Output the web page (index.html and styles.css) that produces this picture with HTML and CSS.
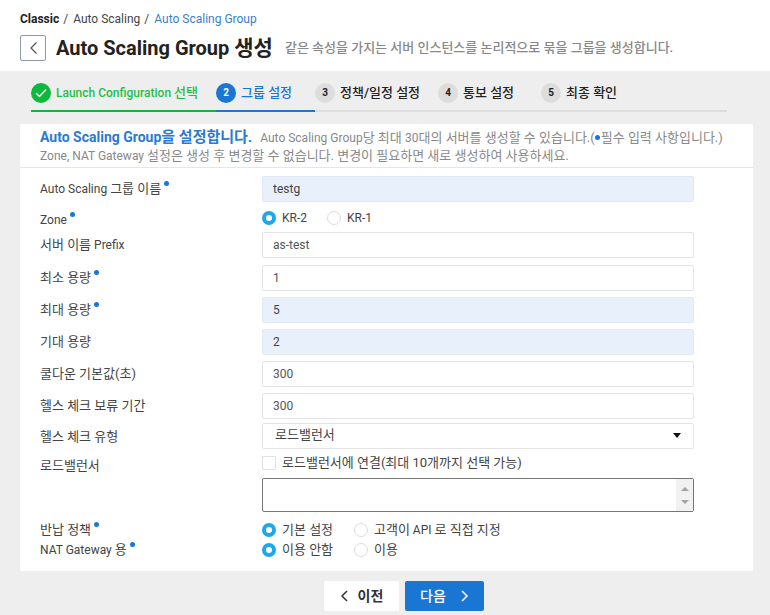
FILE: index.html
```html
<!DOCTYPE html>
<html lang="ko">
<head>
<meta charset="utf-8">
<title>Auto Scaling Group 생성</title>
<link rel="stylesheet" href="styles.css">
</head>
<body>

<header class="top">
  <div class="crumbs">
    <b>Classic</b><span class="sep">/</span><span>Auto Scaling</span><span class="sep">/</span><span class="crumb-on">Auto Scaling Group</span>
  </div>
  <div class="title-row">
    <button class="back" type="button">
      <svg width="9" height="14" viewBox="0 0 9 14"><path d="M7.5 1.5 L2 7 L7.5 12.5" fill="none" stroke="#555" stroke-width="1.3"/></svg>
    </button>
    <h1>Auto Scaling Group <span class="ko">생성</span></h1>
    <p class="title-desc">같은 속성을 가지는 서버 인스턴스를 논리적으로 묶을 그룹을 생성합니다.</p>
  </div>
</header>

<main class="content">
  <ol class="steps">
    <li class="step done s1">
      <span class="num"><svg width="12" height="10" viewBox="0 0 12 10"><path d="M1 5 L4.5 8.5 L11 1.5" fill="none" stroke="#fff" stroke-width="1.4"/></svg></span>
      <span>Launch Configuration <span class="ko">선택</span></span>
    </li>
    <li class="step on s2"><span class="num">2</span><span class="ko">그룹 설정</span></li>
    <li class="step s3"><span class="num">3</span><span class="ko">정책/일정 설정</span></li>
    <li class="step s4"><span class="num">4</span><span class="ko">통보 설정</span></li>
    <li class="step s5"><span class="num">5</span><span class="ko">최종 확인</span></li>
  </ol>

  <section class="card">
    <div class="card-head">
      <p class="head-line"><strong>Auto Scaling Group<span class="ko">을 설정합니다.</span></strong> Auto Scaling Group<span class="ko">당 최대 </span>30<span class="ko">대의 서버를 생성할 수 있습니다.(</span><i class="dot dot-inline"></i><span class="ko">필수 입력 사항입니다.)</span></p>
      <p class="head-line">Zone, NAT Gateway <span class="ko">설정은 생성 후 변경할 수 없습니다. 변경이 필요하면 새로 생성하여 사용하세요.</span></p>
    </div>

    <form class="form">
      <div class="row">
        <label>Auto Scaling <span class="ko">그룹 이름</span><i class="dot"></i></label>
        <input class="field filled" type="text" value="testg">
      </div>
      <div class="row row-zone">
        <label>Zone<i class="dot"></i></label>
        <div class="radios">
          <span class="radio checked">KR-2</span>
          <span class="radio">KR-1</span>
        </div>
      </div>
      <div class="row row-prefix">
        <label><span class="ko">서버 이름</span> Prefix</label>
        <input class="field" type="text" value="as-test">
      </div>
      <div class="row">
        <label class="ko">최소 용량<i class="dot"></i></label>
        <input class="field" type="text" value="1">
      </div>
      <div class="row">
        <label class="ko">최대 용량<i class="dot"></i></label>
        <input class="field filled" type="text" value="5">
      </div>
      <div class="row">
        <label class="ko">기대 용량</label>
        <input class="field filled" type="text" value="2">
      </div>
      <div class="row">
        <label class="ko">쿨다운 기본값(초)</label>
        <input class="field" type="text" value="300">
      </div>
      <div class="row">
        <label class="ko">헬스 체크 보류 기간</label>
        <input class="field" type="text" value="300">
      </div>
      <div class="row row-select">
        <label class="ko">헬스 체크 유형</label>
        <div class="field select"><span class="ko">로드밸런서</span><span class="caret"></span></div>
      </div>
      <div class="row row-lb">
        <label class="ko">로드밸런서</label>
        <div class="lb">
          <div class="check"><span class="box"></span><span class="ko">로드밸런서에 연결(최대 10개까지 선택 가능)</span></div>
          <div class="listbox">
            <div class="scroll"><span class="arrow up"></span><span class="arrow down"></span></div>
          </div>
        </div>
      </div>
      <div class="row row-radio">
        <label class="ko">반납 정책<i class="dot"></i></label>
        <div class="radios">
          <span class="radio checked wide"><span class="ko">기본 설정</span></span>
          <span class="radio"><span><span class="ko">고객이</span> API <span class="ko">로 직접 지정</span></span></span>
        </div>
      </div>
      <div class="row row-radio">
        <label>NAT Gateway <span class="ko">용</span><i class="dot"></i></label>
        <div class="radios">
          <span class="radio checked wide"><span class="ko">이용 안함</span></span>
          <span class="radio"><span class="ko">이용</span></span>
        </div>
      </div>
    </form>
  </section>

  <div class="actions">
    <button class="btn" type="button">
      <svg width="9" height="12" viewBox="0 0 9 12"><path d="M7 1 L2 6 L7 11" fill="none" stroke="#333" stroke-width="1.5"/></svg>
      이전
    </button>
    <button class="btn btn-next" type="button">
      다음
      <svg width="9" height="12" viewBox="0 0 9 12"><path d="M2 1 L7 6 L2 11" fill="none" stroke="#fff" stroke-width="1.5"/></svg>
    </button>
  </div>
</main>

</body>
</html>
```

FILE: styles.css
```css
*, *:before { box-sizing: border-box; }

body {
   margin: 0;
   height: 615px;
   overflow: hidden;
   background: #eee;
   color: #333;
   font: normal 12px/18px Roboto, "Noto Sans CJK KR", sans-serif;
}

p, h1, ol { margin: 0; padding: 0; }

/* hangul runs a size up from the latin next to them */
.ko { font-size: 13px; }

.top {
   height: 71px;
   background: #fff;
   padding: 10px 20px 0;
}

.crumbs { line-height: 18px; color: #444; }
.crumbs b { font-weight: 700; color: #222; }
.crumbs .sep { margin: 0 5px 0 4px; }
.crumb-on { color: #3a7fc9; }

.title-row {
   display: flex;
   align-items: center;
   margin-top: 7px;
}

.back {
   width: 26px;
   height: 26px;
   padding: 0;
   background: #fff;
   border: 1px solid #8a9bb0;
   border-radius: 2px;
   display: flex;
   align-items: center;
   justify-content: center;
}

h1 {
   margin-left: 10px;
   font-size: 20px;
   line-height: 26px;
   font-weight: 700;
   color: #222;
}

h1 .ko { font-size: 21px; }

.title-desc {
   margin-left: 12px;
   font-size: 13px;
   font-weight: 500;
   color: #888;
}

.content { padding: 0 17px 0 20px; }

.steps {
   list-style: none;
   display: flex;
   height: 41px;
   margin: 0 26px 12px 11px;
   border-bottom: 2px solid #ddd;
   font-weight: 500;
   color: #222;
}

.step {
   display: flex;
   align-items: center;
   height: 41px;
   padding-top: 4px;
   border-bottom: 2px solid transparent;
   white-space: nowrap;
}

.s1 { width: 185px; }
.s2 { width: 99px; }
.s3 { width: 123px; }
.s4 { width: 103px; }

.num {
   flex: none;
   width: 20px;
   height: 20px;
   margin-right: 5px;
   border-radius: 50%;
   background: #ddd;
   font-size: 10px;
   font-weight: 700;
   display: flex;
   align-items: center;
   justify-content: center;
}

.step.done { color: #1fbf4a; border-bottom-color: #0cb93c; }
.step.done .num { background: #0cb93c; }
.step.on { color: #1976d2; border-bottom-color: #1976d2; }
.step.on .num { background: #1976d2; color: #fff; }

.card {
   height: 447px;
   background: #fff;
   border-radius: 2px;
}

.card-head {
   height: 44px;
   padding: 4px 20px 0;
   border-bottom: 1px solid #e6e6e6;
   color: #888;
   line-height: 18px;
}

.head-line { white-space: nowrap; }

.card-head strong {
   font-size: 14px;
   font-weight: 700;
   color: #2a7ad0;
   margin-right: 5px;
}

.card-head strong .ko { font-size: 15px; }

.form { padding: 8px 59px 0 20px; }

.row {
   display: flex;
   align-items: center;
   height: 26px;
   margin-bottom: 6px;
}

.row label {
   flex: none;
   width: 222px;
   color: #444;
}

.row-zone { height: 20px; margin-bottom: 4px; margin-top: 6px; }
.row-zone label { padding-top: 4px; }
.row-prefix { margin-bottom: 7px; }
.row-select { margin-bottom: 1px; margin-top: -2px; }
.row-select label { padding-top: 2px; }
.row-lb { align-items: flex-start; height: 62px; margin-bottom: 8px; }
.row-lb label { margin-top: 7px; }
.row-radio { height: 20px; margin-bottom: 0; }

.dot {
   display: inline-block;
   width: 5px;
   height: 5px;
   margin-left: 3px;
   border-radius: 50%;
   background: #1976d2;
   vertical-align: 7px;
}

.dot-inline { margin: 0 1px 0 0; vertical-align: 2px; }

.field {
   flex: 1;
   min-width: 0;
   height: 26px;
   padding: 0 10px;
   border: 1px solid #e4e4e4;
   border-radius: 2px;
   background: #fff;
   color: #555;
   font: inherit;
   outline: 0;
}

.filled { background: #e8f0fb; border-color: #e2e8f2; color: #444; }

.select {
   display: flex;
   align-items: center;
   justify-content: space-between;
   padding: 0 12px 2px 12px;
   color: #444;
}

.caret {
   width: 0;
   height: 0;
   border: 4px solid transparent;
   border-top: 5px solid #111;
   border-bottom: 0;
}

.radios { display: flex; align-items: center; }

.radio {
   display: flex;
   align-items: center;
   margin-right: 20px;
   color: #444;
}

.radio:before {
   content: '';
   flex: none;
   width: 14px;
   height: 14px;
   margin-right: 6px;
   border: 1px solid #ddd;
   border-radius: 50%;
   background: #fff;
}

.radio.checked:before { border: 4px solid #1ba8ec; }
.radio.wide { width: 78px; margin-right: 14px; }

.lb { flex: 1; min-width: 0; }

.check {
   display: flex;
   align-items: center;
   height: 26px;
   color: #444;
}

.box {
   width: 14px;
   height: 14px;
   margin-right: 6px;
   border: 1px solid #e0e0e0;
   border-radius: 1px;
}

.listbox {
   height: 34px;
   margin-top: 2px;
   border: 1px solid #767676;
   border-radius: 2px;
   display: flex;
   justify-content: flex-end;
}

.scroll {
   width: 17px;
   background: #f1f1f1;
   display: flex;
   flex-direction: column;
   align-items: center;
   justify-content: space-between;
   padding: 8px 0 7px;
}

.arrow {
   width: 0;
   height: 0;
   border-left: 4px solid transparent;
   border-right: 4px solid transparent;
}

.arrow.up { border-bottom: 4px solid #a3a3a3; }
.arrow.down { border-top: 4px solid #a3a3a3; }

.actions {
   display: flex;
   gap: 6px;
   margin-top: 10px;
   padding-left: 304px;
}

.btn {
   display: flex;
   align-items: center;
   justify-content: center;
   gap: 9px;
   width: 75px;
   height: 30px;
   padding: 0;
   border: 0;
   border-radius: 2px;
   background: #fff;
   color: #333;
   font: 700 14px/18px Roboto, "Noto Sans CJK KR", sans-serif;
}

.btn-next { width: 79px; background: #1976d2; color: #fff; font-weight: 500; gap: 14px; }
```
